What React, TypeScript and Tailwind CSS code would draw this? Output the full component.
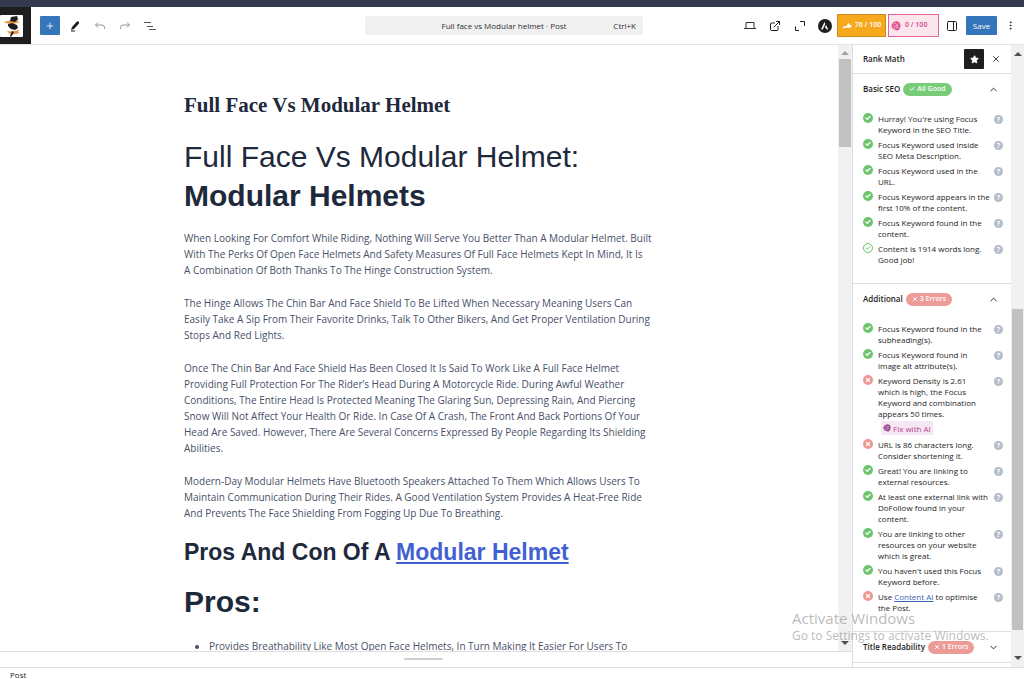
import type { ReactNode } from 'react';
import { Check, ChevronDown, ChevronUp, ExternalLink, MoreVertical, PanelRight, Plus, Star, X } from 'lucide-react';

type Status = 'ok' | 'outline' | 'error';
type Item = { status: Status; lines: ReactNode[]; fix?: boolean };

const paragraphs = [
    [
        'When Looking For Comfort While Riding, Nothing Will Serve You Better Than A Modular Helmet. Built',
        'With The Perks Of Open Face Helmets And Safety Measures Of Full Face Helmets Kept In Mind, It Is',
        'A Combination Of Both Thanks To The Hinge Construction System.',
    ],
    [
        'The Hinge Allows The Chin Bar And Face Shield To Be Lifted When Necessary Meaning Users Can',
        'Easily Take A Sip From Their Favorite Drinks, Talk To Other Bikers, And Get Proper Ventilation During',
        'Stops And Red Lights.',
    ],
    [
        'Once The Chin Bar And Face Shield Has Been Closed It Is Said To Work Like A Full Face Helmet',
        'Providing Full Protection For The Rider’s Head During A Motorcycle Ride. During Awful Weather',
        'Conditions, The Entire Head Is Protected Meaning The Glaring Sun, Depressing Rain, And Piercing',
        'Snow Will Not Affect Your Health Or Ride. In Case Of A Crash, The Front And Back Portions Of Your',
        'Head Are Saved. However, There Are Several Concerns Expressed By People Regarding Its Shielding',
        'Abilities.',
    ],
    [
        'Modern-Day Modular Helmets Have Bluetooth Speakers Attached To Them Which Allows Users To',
        'Maintain Communication During Their Rides. A Good Ventilation System Provides A Heat-Free Ride',
        'And Prevents The Face Shielding From Fogging Up Due To Breathing.',
    ],
];

const basic: Item[] = [
    { status: 'ok', lines: ["Hurray! You're using Focus", 'Keyword in the SEO Title.'] },
    { status: 'ok', lines: ['Focus Keyword used inside', 'SEO Meta Description.'] },
    { status: 'ok', lines: ['Focus Keyword used in the', 'URL.'] },
    { status: 'ok', lines: ['Focus Keyword appears in the', 'first 10% of the content.'] },
    { status: 'ok', lines: ['Focus Keyword found in the', 'content.'] },
    { status: 'outline', lines: ['Content is 1914 words long.', 'Good job!'] },
];

const additional: Item[] = [
    { status: 'ok', lines: ['Focus Keyword found in the', 'subheading(s).'] },
    { status: 'ok', lines: ['Focus Keyword found in', 'image alt attribute(s).'] },
    { status: 'error', lines: ['Keyword Density is 2.61', 'which is high, the Focus', 'Keyword and combination', 'appears 50 times.'], fix: true },
    { status: 'error', lines: ['URL is 86 characters long.', 'Consider shortening it.'] },
    { status: 'ok', lines: ['Great! You are linking to', 'external resources.'] },
    { status: 'ok', lines: ['At least one external link with', 'DoFollow found in your', 'content.'] },
    { status: 'ok', lines: ['You are linking to other', 'resources on your website', 'which is great.'] },
    { status: 'ok', lines: ["You haven't used this Focus", 'Keyword before.'] },
    {
        status: 'error',
        lines: [<>Use <a href="#content-ai" className="text-[#3b63b5] underline">Content AI</a> to optimise</>, 'the Post.'],
    },
];

function StatusIcon({ status }: { status: Status }) {
    if (status === 'outline') {
        return (
            <span className="flex size-[10px] shrink-0 items-center justify-center rounded-full border border-[#6cc56c] text-[#6cc56c]">
                <Check size={6} strokeWidth={4} />
            </span>
        );
    }
    if (status === 'error') {
        return (
            <span className="flex size-[10px] shrink-0 items-center justify-center rounded-full bg-[#ec9892] text-white">
                <X size={6} strokeWidth={5} />
            </span>
        );
    }
    return (
        <span className="flex size-[10px] shrink-0 items-center justify-center rounded-full bg-[#6cc56c] text-white">
            <Check size={6} strokeWidth={5} />
        </span>
    );
}

// round pink "brain" mark of Content AI
function BrainIcon({ className }: { className: string }) {
    return (
        <svg viewBox="0 0 20 20" className={className} fill="none">
            <path d="M9 1a8 8 0 0 0-6 4 7 7 0 0 0-1 8 7 7 0 0 0 6 4l2 2 6-1 1-3a8 8 0 0 0 2-7 8 8 0 0 0-10-7z" fill="currentColor" />
            <path d="M5 6c2-2 4-1 5 0s4 1 5-1M4 11c2-1 3-1 4 1M7 13v3" stroke="#fbe4ee" strokeWidth="1.2" />
            <circle cx="12" cy="11" r="2.400" stroke="#fbe4ee" strokeWidth="1.200" />
        </svg>
    );
}

function CheckList({ items }: { items: Item[] }) {
    return (
        <ul className="flex flex-col gap-1 pt-[9px] pr-[8px] pb-[18px] pl-[10px] text-[8px] leading-[11px]">
            {items.map((item, i) => (
                <li key={i} className="flex items-start">
                    <StatusIcon status={item.status} />
                    <div className="ml-[5px] flex-1 whitespace-nowrap">
                        {item.lines.map((line, n) => <p key={n}>{line}</p>)}
                        {item.fix && (
                            <button className="mt-[2px] ml-[3px] flex h-[14px] items-center gap-[2px] bg-[#f6e8f3] px-[2px] text-[#b83e95]">
                                <BrainIcon className="size-[8px] text-[#98408c]" />
                                Fix with AI
                            </button>
                        )}
                    </div>
                    <button aria-label="Help" className="mt-[2px] flex size-[9px] shrink-0 items-center justify-center rounded-full bg-[#b3bcc9] text-[7px] font-bold text-white">?</button>
                </li>
            ))}
        </ul>
    );
}

function Panel({ title, badge, good, open, items }: { title: string; badge: string; good?: boolean; open?: boolean; items?: Item[] }) {
    return (
        <section className="border-b border-[#dedede]">
            <button className="flex h-[30px] w-full items-center pr-[12px] pl-[10px] text-[8px] font-semibold whitespace-nowrap">
                {title}
                <span className={`ml-[3px] flex h-[13px] items-center gap-[2px] rounded-full px-[6px] text-[7px] font-semibold text-white ${good ? 'bg-[#78cb77]' : 'bg-[#ec9b96]'}`}>
                    {good ? <Check size={6} strokeWidth={4} /> : <X size={6} strokeWidth={4} />}
                    {badge}
                </span>
                <span className="ml-auto">{open ? <ChevronUp size={11} /> : <ChevronDown size={11} />}</span>
            </button>
            {items && <CheckList items={items} />}
        </section>
    );
}

function ToolButton({ label, children }: { label: string; children: ReactNode }) {
    return <button aria-label={label} className="flex h-6 w-[25px] shrink-0 items-center justify-center">{children}</button>;
}

function Header() {
    return (
        <header className="grid h-[38px] shrink-0 grid-cols-[1fr_278px_381px] items-center border-b border-[#e4e4e4]">
            <div className="flex h-full items-center">
                <a href="#posts" aria-label="View posts" className="flex h-full w-[31px] items-center bg-[#1e1e1e]">
                    <svg viewBox="0 0 23 22" className="h-[22px] w-[23px]">
                        <rect width="23" height="22" rx="1" fill="#fff" />
                        <path d="M4 7l6-1.500 9-1.500-2 2 3 1-7 2-8-1zM7 16l5 .5 7-1.500-1 2 2 1-7 1.500-4-1z" fill="#e09a45" />
                        <path d="M11 2l6-1 1 3-3 3-5-1zM8 9l4-1 5 2 1 3-3 2-4-1-3-3zM12 16l2 1-3 5-1-1z" fill="#1e1e1e" />
                    </svg>
                </a>
                <button aria-label="Add block" className="ml-[9px] flex h-[19px] w-5 items-center justify-center rounded-[1px] bg-[#3575ba] text-white">
                    <Plus size={10} />
                </button>
                <div className="ml-[2px] flex text-[#1e1e1e]">
                    <ToolButton label="Tools">
                        <svg viewBox="0 0 12 12" className="size-[12px]">
                            <path d="M3 7l5-5.500a1.500 1.500 0 0 1 2 2L5 9l-3 1z" fill="currentColor" />
                            <path d="M2 11h4" stroke="currentColor" />
                        </svg>
                    </ToolButton>
                    <ToolButton label="Undo">
                        <svg viewBox="0 0 12 10" className="h-[10px] w-[12px]" fill="none" stroke="#949494">
                            <path d="M4 1.500L1.500 4 4 6.500M1.500 4H8a2.500 2.500 0 0 1 2.500 2.500V8" />
                        </svg>
                    </ToolButton>
                    <ToolButton label="Redo">
                        <svg viewBox="0 0 12 10" className="h-[10px] w-[12px]" fill="none" stroke="#949494">
                            <path d="M8 1.500L10.500 4 8 6.500M10.500 4H4a2.500 2.500 0 0 0-2.500 2.500V8" />
                        </svg>
                    </ToolButton>
                    <ToolButton label="Document overview">
                        <svg viewBox="0 0 12 10" className="h-[10px] w-[12px]" stroke="#555">
                            <path d="M0 1.500h7M3 5.500h6M5 8.500h7" />
                        </svg>
                    </ToolButton>
                </div>
            </div>

            <button className="grid h-[19px] grid-cols-[1fr_auto_1fr] items-center rounded-[2px] bg-[#f0f0f0] px-[7px] text-[8px] text-[#2f2f2f]">
                <span className="col-start-2">Full face vs Modular helmet · Post</span>
                <span className="text-right">Ctrl+K</span>
            </button>

            <div className="flex items-center justify-end text-[#1e1e1e]">
                <ToolButton label="View">
                    <svg viewBox="0 0 12 9" className="h-[9px] w-[12px]" fill="none" stroke="#333">
                        <path d="M2 7V1.500h8V7M0 7.500h12" />
                    </svg>
                </ToolButton>
                <ToolButton label="Open preview"><ExternalLink size={12} strokeWidth={2} /></ToolButton>
                <ToolButton label="Fullscreen">
                    <svg viewBox="0 0 10 10" className="size-[10px]" fill="none" stroke="currentColor">
                        <path d="M5 .5h4.500V5M.5 5.500v4H4" />
                    </svg>
                </ToolButton>
                <ToolButton label="Astra settings">
                    <svg viewBox="0 0 14 14" className="size-[14px]">
                        <circle cx="7" cy="7" r="7" fill="#1e1e1e" />
                        <path d="M6.500 3L3 10.500h1.700L7.300 5zM8 6l-1.300 2.700h1.200l.7 1.800h1.700z" fill="#fff" />
                    </svg>
                </ToolButton>
                <button className="flex h-[23px] w-[49px] shrink-0 items-center justify-center gap-[3px] border border-[#cf8c1c] bg-[#f7a91e] text-[7px] font-semibold whitespace-nowrap text-white">
                    <svg viewBox="0 0 12 8" className="h-[8px] w-[10px]" fill="currentColor">
                        <path d="M0 7l3-3 2 .5L8 0l1 2.500 3 1L10 6 5 6z" />
                    </svg>
                    76 / 100
                </button>
                <button className="ml-[2px] flex h-[23px] w-[51px] shrink-0 items-center gap-[4px] border border-[#e8629a] bg-[#fce6ee] pl-[2px] text-[7px] font-semibold whitespace-nowrap text-[#d14a86]">
                    <BrainIcon className="size-[10px] text-[#e0528f]" />
                    0 / 100
                </button>
                <ToolButton label="Settings"><PanelRight size={12} strokeWidth={2} /></ToolButton>
                <button className="ml-[2px] h-[19px] w-[31px] shrink-0 rounded-[1px] bg-[#3575ba] text-[8px] font-medium text-white">Save</button>
                <button aria-label="Options" className="flex w-[27px] shrink-0 items-center justify-center"><MoreVertical size={11} strokeWidth={2} /></button>
            </div>
        </header>
    );
}

function Arrow({ up, light }: { up?: boolean; light?: boolean }) {
    return (
        <svg viewBox="0 0 8 4" className="h-[4px] w-[8px] shrink-0">
            <path d={up ? 'M0 4L4 0L8 4z' : 'M0 0L4 4L8 0z'} fill={light ? '#a3a3a3' : '#505050'} />
        </svg>
    );
}

export default function App() {
    return (
        <div className="relative flex h-screen flex-col overflow-hidden bg-white font-['Open_Sans','Noto_Sans',sans-serif] text-[#1e1e1e]">
            <div className="h-[7px] shrink-0 bg-[#343a4f]" />
            <Header />

            <div className="flex min-h-0 flex-1">
                <div className="flex min-w-0 flex-1 flex-col">
                    <div className="flex min-h-0 flex-1">
                        <main className="min-w-0 flex-1 overflow-hidden">
                            <article className="mx-auto w-[470px] pt-[46px] font-['Liberation_Sans',sans-serif] whitespace-nowrap text-[#1e293b]">
                                <h1 className="font-['Liberation_Serif',serif] text-[21px] leading-[28px] font-bold">Full Face Vs Modular Helmet</h1>
                                <h2 className="mt-[18px] text-[30px] leading-[39px]">
                                    Full Face Vs Modular Helmet:<br />
                                    <strong>Modular Helmets</strong>
                                </h2>
                                <div className="mt-[15px] flex flex-col gap-[17px] font-['Open_Sans',sans-serif] text-[10px] leading-[16px] text-[#475067]">
                                    {paragraphs.map((lines, i) => (
                                        <p key={i}>
                                            {lines.map((line) => <span key={line} className="block">{line}</span>)}
                                        </p>
                                    ))}
                                </div>
                                <h2 className="mt-4 text-[23px] leading-[30px] font-bold">
                                    Pros And Con Of A <a href="#modular-helmet" className="text-[#4161d3] underline">Modular Helmet</a>
                                </h2>
                                <h2 className="mt-[15px] text-[30px] leading-[39px] font-bold">Pros:</h2>
                                <ul className="mt-[17px] list-disc pl-[25px] font-['Open_Sans',sans-serif] text-[10px] leading-[16px] text-[#475067]">
                                    <li>Provides Breathability Like Most Open Face Helmets, In Turn Making It Easier For Users To</li>
                                </ul>
                            </article>
                        </main>
                        <div className="flex w-[14px] shrink-0 flex-col items-center bg-[#f1f1f1] py-[6px]">
                            <Arrow up light />
                            <div className="mt-[4px] h-[88px] w-[12px] bg-[#c1c1c1]" />
                            <div className="mt-auto"><Arrow /></div>
                        </div>
                    </div>
                    <div className="flex h-4 shrink-0 justify-center border-t border-[#dedede] pt-[6px] pr-[5px]">
                        <div className="h-[2px] w-[39px] rounded-full bg-[#d0d0d0]" />
                    </div>
                </div>

                <aside className="w-[159px] shrink-0 overflow-hidden border-l border-[#dedede]">
                    <div className="flex h-[29px] items-center border-b border-[#dedede] pr-[3px] pl-[10px] text-[8px] font-semibold">
                        Rank Math
                        <button aria-label="Unpin" className="ml-auto flex size-5 items-center justify-center rounded-[1px] bg-[#1e1e1e] text-white">
                            <Star size={9} fill="currentColor" />
                        </button>
                        <button aria-label="Close" className="flex w-6 items-center justify-center"><X size={10} /></button>
                    </div>
                    <Panel title="Basic SEO" badge="All Good" good open items={basic} />
                    <Panel title="Additional" badge="3 Errors" open items={additional} />
                    <Panel title="Title Readability" badge="1 Errors" />
                </aside>
                <div className="flex w-[13px] shrink-0 flex-col items-center bg-[#f1f1f1] py-[7px]">
                    <Arrow up />
                    <div className="mt-auto h-[321px] w-[11px] bg-[#c1c1c1]" />
                    <div className="mt-[26px]"><Arrow /></div>
                </div>
            </div>

            <footer className="h-[12px] shrink-0 border-t border-[#dedede] pl-[10px] text-[8px] leading-[14px]">Post</footer>

            <div className="pointer-events-none absolute right-[41px] bottom-[35px] w-[191px] whitespace-nowrap text-[#8c8c8c]/60">
                <p className="text-[15px] leading-[20px]">Activate Windows</p>
                <p className="text-[12px] leading-[16px]">Go to Settings to activate Windows.</p>
            </div>
        </div>
    );
}
